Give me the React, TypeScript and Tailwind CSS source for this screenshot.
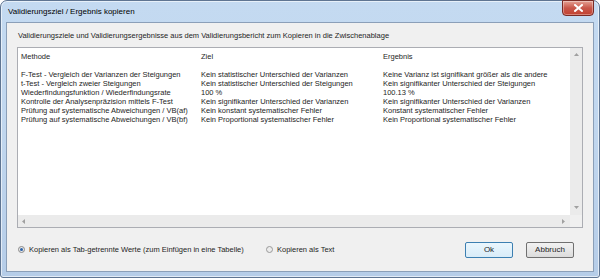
import React from "react";

const rows: [string, string, string][] = [
  ["F-Test - Vergleich der Varianzen der Steigungen", "Kein statistischer Unterschied der Varianzen", "Keine Varianz ist signifikant größer als die andere"],
  ["t-Test - Vergleich zweier Steigungen", "Kein statistischer Unterschied der Steigungen", "Kein signifikanter Unterschied der Steigungen"],
  ["Wiederfindungsfunktion / Wiederfindungsrate", "100 %", "100.13 %"],
  ["Kontrolle der Analysenpräzision mittels F-Test", "Kein signifikanter Unterschied der Varianzen", "Kein signifikanter Unterschied der Varianzen"],
  ["Prüfung auf systematische Abweichungen / VB(af)", "Kein konstant systematischer Fehler", "Konstant systematischer Fehler"],
  ["Prüfung auf systematische Abweichungen / VB(bf)", "Kein Proportional systematischer Fehler", "Kein Proportional systematischer Fehler"],
];

function Row({ a, b, c }: { a: string; b: string; c: string }) {
  return (
    <div className="flex h-[9px] leading-[9px] whitespace-nowrap">
      <div className="w-[180px] shrink-0">{a}</div>
      <div className="w-[182px] shrink-0">{b}</div>
      <div>{c}</div>
    </div>
  );
}

export default function App() {
  return (
    <div
      className="w-[600px] h-[279px] bg-white text-[#1e1e1e]"
      style={{ fontFamily: '"Liberation Sans", Arial, sans-serif' }}
    >
      <div className="relative w-[600px] h-[278px] rounded-t-[7px] rounded-b-[3px] border border-[#5f7592] bg-gradient-to-b from-[#c4daf1] via-[#c0d6ee] to-[#b6cde8] flex flex-col px-[5px] pb-[5px] shadow-[inset_0_0_0_1px_rgba(255,255,255,0.6)]">
        <div className="h-[21px] shrink-0 flex items-center pl-[2px] text-[8px] text-black">
          Validierungsziel / Ergebnis kopieren
        </div>
        <div className="absolute top-[-1px] right-[5px] w-[32px] h-[16px] rounded-b-[4px] border border-[#7a2a24] bg-gradient-to-b from-[#e4a093] via-[#c8564a] to-[#c2412f] flex items-center justify-center shadow-[inset_0_0_0_1px_rgba(255,255,255,0.35)]">
          <svg width="9" height="8" viewBox="0 0 9 8">
            <path d="M1 1 L8 7 M8 1 L1 7" stroke="#fff" strokeWidth="2" strokeLinecap="square" />
          </svg>
        </div>
        <div className="flex-1 bg-[#f0f0f0] border border-[#8b9fb8] flex flex-col text-[7.5px] text-[#1e1e1e]">
          <div className="h-[24px] shrink-0 flex items-center pl-[11px] pt-[1px]">
            Validierungsziele und Validierungsergebnisse aus dem Validierungsbericht zum Kopieren in die Zwischenablage
          </div>
          <div className="mx-[10px] h-[181px] border border-[#abadb3] bg-white flex">
            <div className="flex-1 flex flex-col min-w-0">
              <div className="flex-1 pl-[3px] pt-[4px] overflow-hidden">
                <Row a="Methode" b="Ziel" c="Ergebnis" />
                <div className="h-[9px]" />
                {rows.map((r, i) => (
                  <Row key={i} a={r[0]} b={r[1]} c={r[2]} />
                ))}
              </div>
              <div className="h-[12px] bg-[#ebebeb] flex items-center justify-between px-[4px]">
                <svg width="4" height="5" viewBox="0 0 4 5"><path d="M3 0 L0 2.5 L3 5 Z" fill="#a0a0a0" /></svg>
                <svg width="4" height="5" viewBox="0 0 4 5"><path d="M0 0 L3 2.5 L0 5 Z" fill="#a0a0a0" /></svg>
              </div>
            </div>
            <div className="w-[12px] flex flex-col">
              <div className="flex-1 bg-[#ebebeb] flex flex-col items-center justify-between py-[5px]">
                <svg width="5" height="4" viewBox="0 0 5 4"><path d="M0 3 L2.5 0 L5 3 Z" fill="#a0a0a0" /></svg>
                <svg width="5" height="4" viewBox="0 0 5 4"><path d="M0 0 L2.5 3 L5 0 Z" fill="#a0a0a0" /></svg>
              </div>
              <div className="h-[12px] bg-[#f0f0f0]" />
            </div>
          </div>
          <div className="flex-1 flex items-center pl-[11px] pr-[19px]">
            <div className="flex items-center w-[248px]">
              <div className="w-[7px] h-[7px] rounded-full border border-[#8a8a8a] bg-[#e8e8e8] flex items-center justify-center mr-[4px]">
                <div className="w-[3px] h-[3px] rounded-full bg-[#2b62a8]" />
              </div>
              <span>Kopieren als Tab-getrennte Werte (zum Einfügen in eine Tabelle)</span>
            </div>
            <div className="flex items-center">
              <div className="w-[7px] h-[7px] rounded-full border border-[#9a9a9a] bg-[#ececec] mr-[4px]" />
              <span>Kopieren als Text</span>
            </div>
            <div className="flex-1" />
            <div className="w-[48px] h-[16px] rounded-[2px] border border-[#3c7fb1] bg-gradient-to-b from-[#eaf6fd] to-[#d9ecf8] flex items-center justify-center text-[8px] mr-[13px]">
              Ok
            </div>
            <div className="w-[48px] h-[16px] rounded-[2px] border border-[#707070] bg-gradient-to-b from-[#f2f2f2] to-[#dcdcdc] flex items-center justify-center text-[8px]">
              Abbruch
            </div>
          </div>
        </div>
      </div>
    </div>
  );
}
